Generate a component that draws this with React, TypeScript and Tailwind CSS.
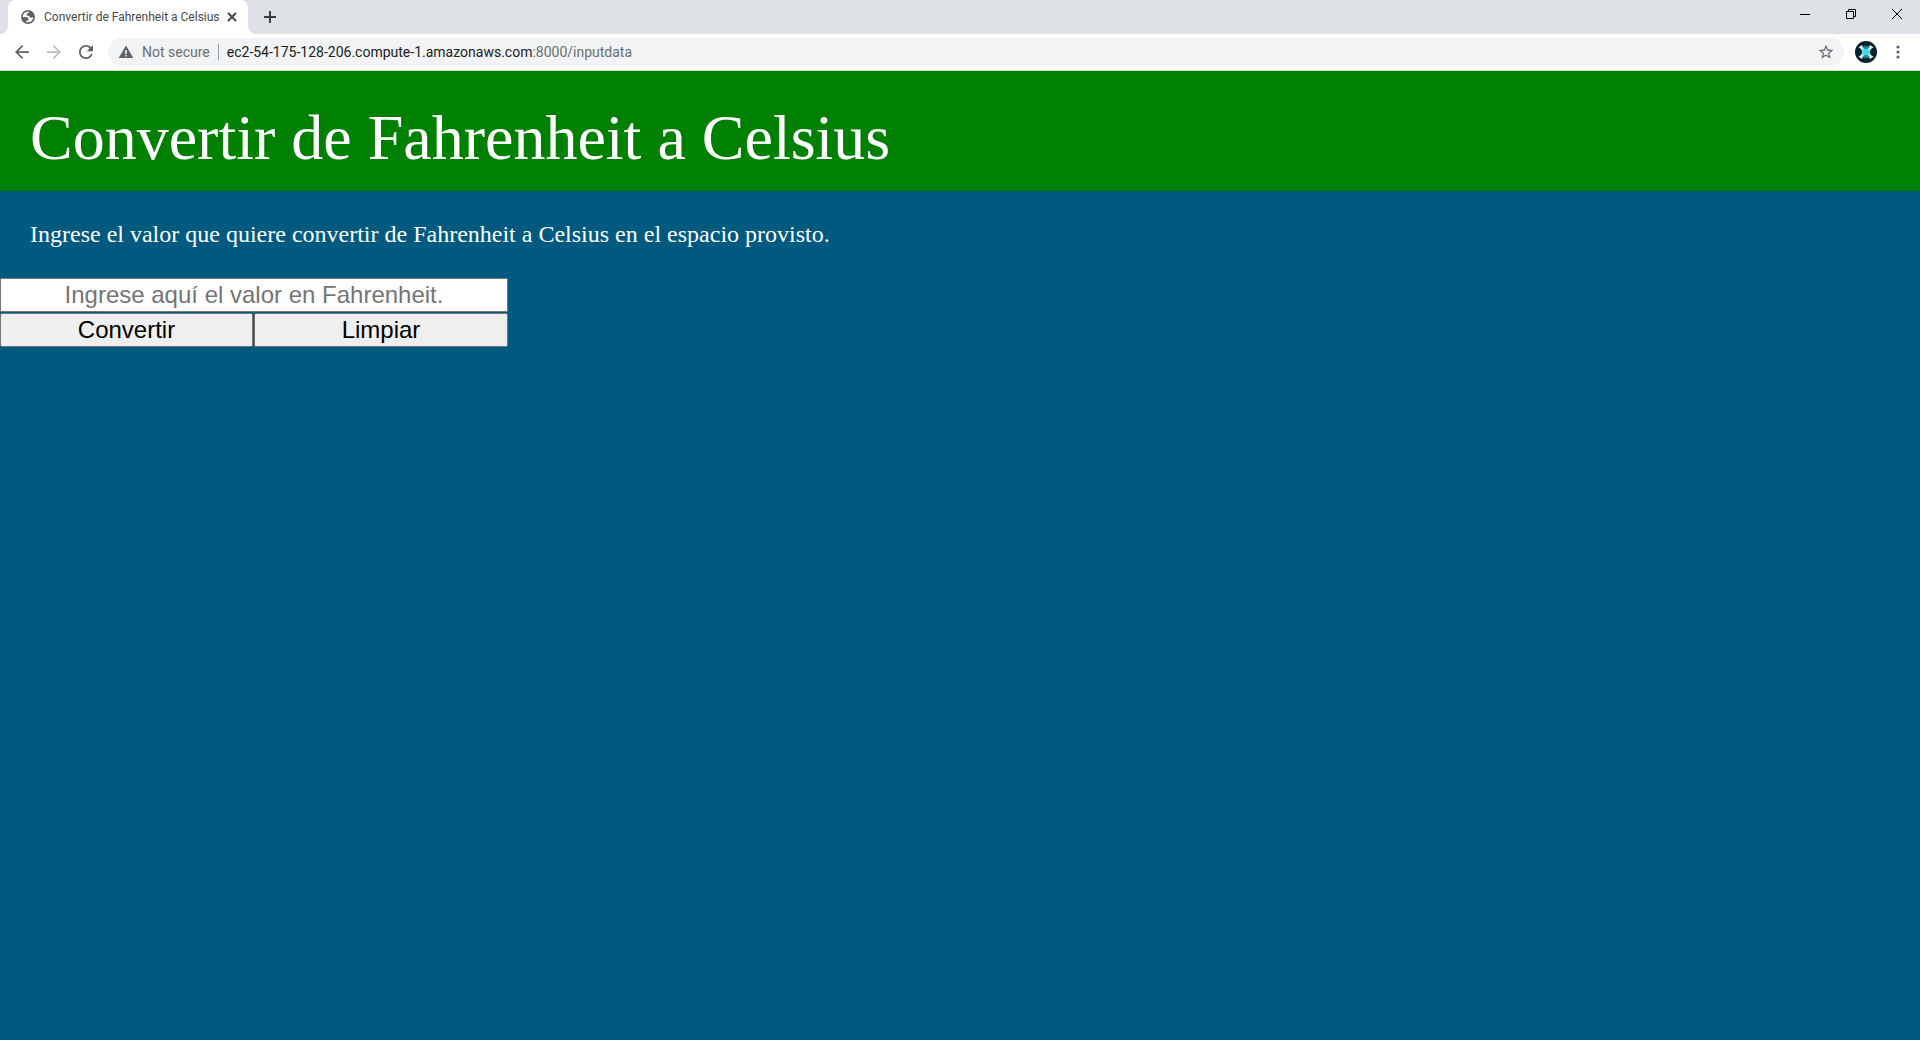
import { useState } from "react";

function TabShoulder({ flip = false }: { flip?: boolean }) {
  return (
    <svg viewBox="0 0 8 8" className={flip ? "size-2 -scale-x-100" : "size-2"} aria-hidden="true">
      <path d="M8 0v8H0a8 8 0 0 0 8-8z" fill="#fff" />
    </svg>
  );
}

function TabStrip() {
  return (
    <div className="flex h-[34px] items-end justify-between bg-[#dee1e6]">
      <div className="flex h-full items-end">
        <TabShoulder />
        <div className="flex h-full w-60 items-center rounded-t-lg bg-white pr-2 pl-3">
          <svg viewBox="0 0 24 24" className="size-4 shrink-0" fill="#5f6368" fillRule="evenodd" aria-hidden="true">
            <path d="M12 1.500a10.500 10.500 0 1 0 0 21a10.500 10.500 0 1 0 0-21zM4 12h4.400c3.407.022 4.922 1.730 4.543 5.127H9.488v2.470a8.004 8.004 0 0 0 10.498-8.080C19.327 12.504 18.332 13 17 13c-2.137 0-3.206-.916-3.206-2.750h-3.748c-.274-2.728.683-4.092 2.870-4.092 0-.975.327-1.597.811-1.970A8.004 8.004 0 0 0 4 12z" />
          </svg>
          <span className="ml-2 flex-1 text-xs whitespace-nowrap text-[#45494d]">
            Convertir de Fahrenheit a Celsius
          </span>
          <button type="button" aria-label="Close tab" className="grid size-4 place-items-center">
            <svg viewBox="0 0 16 16" className="size-4" fill="none" stroke="#3c4043" strokeWidth="1.8">
              <path d="M4 4l8 8M12 4l-8 8" />
            </svg>
          </button>
        </div>
        <TabShoulder flip />
        <button type="button" aria-label="New tab" className="grid h-[34px] w-7 place-items-center">
          <svg viewBox="0 0 12 12" className="size-3" fill="none" stroke="#3c4043" strokeWidth="2">
            <path d="M6 0v12M0 6h12" />
          </svg>
        </button>
      </div>
      <div className="flex h-full items-start">
        <button type="button" aria-label="Minimize" className="grid h-7 w-[46px] place-items-center">
          <svg viewBox="0 0 10 10" className="size-2.5" shapeRendering="crispEdges">
            <path d="M0 5h10v1H0z" fill="#000" />
          </svg>
        </button>
        <button type="button" aria-label="Restore" className="grid h-7 w-[46px] place-items-center">
          <svg viewBox="0 0 10 10" className="size-2.5" fill="none" stroke="#000">
            <path d="M.5 2.5h7v7h-7zM2.5 2.5v-2h7v7h-2" />
          </svg>
        </button>
        <button type="button" aria-label="Close" className="grid h-7 w-[46px] place-items-center">
          <svg viewBox="0 0 10 10" className="size-2.5" fill="none" stroke="#000">
            <path d="M0 0l10 10M10 0L0 10" />
          </svg>
        </button>
      </div>
    </div>
  );
}

function Toolbar() {
  return (
    <div className="flex h-9 items-center bg-white pr-3 pl-1.5">
      <button type="button" aria-label="Back" className="grid h-7 w-8 place-items-center">
        <svg viewBox="4 4 16 16" className="size-3.5" fill="#5f6368">
          <path d="M20 11H7.830l5.590-5.590L12 4l-8 8 8 8 1.410-1.410L7.830 13H20v-2z" />
        </svg>
      </button>
      <button type="button" aria-label="Forward" className="grid h-7 w-8 place-items-center">
        <svg viewBox="4 4 16 16" className="size-3.5 -scale-x-100" fill="#babcbe">
          <path d="M20 11H7.830l5.590-5.590L12 4l-8 8 8 8 1.410-1.410L7.830 13H20v-2z" />
        </svg>
      </button>
      <button type="button" aria-label="Reload" className="grid h-7 w-8 place-items-center">
        <svg viewBox="4 4 16 16" className="size-3.5" fill="#5f6368">
          <path d="M17.650 6.350C16.200 4.900 14.210 4 12 4c-4.420 0-7.990 3.580-7.990 8s3.570 8 7.990 8c3.730 0 6.840-2.550 7.730-6h-2.080c-.82 2.330-3.040 4-5.650 4-3.310 0-6-2.690-6-6s2.690-6 6-6c1.660 0 3.140.690 4.220 1.780L13 11h7V4l-2.350 2.350z" />
        </svg>
      </button>
      <div className="ml-1.5 flex h-7 flex-1 items-center rounded-full bg-[#f1f3f4] pr-2.5 pl-2.5 text-sm">
        <svg viewBox="0 0 16 16" className="size-4" aria-hidden="true">
          <path d="M8 1.5L15.300 14H.7z" fill="#5f6368" />
          <path d="M7.200 6h1.600v4H7.200zM7.200 11h1.600v1.500H7.200z" fill="#f1f3f4" />
        </svg>
        <span className="ml-2 text-[#6b6f73]">Not secure</span>
        <span className="mx-2 h-4 w-px bg-[#9aa0a6]" />
        <a href="#inputdata" className="flex-1 whitespace-nowrap text-[#202124]">
          ec2-54-175-128-206.compute-1.amazonaws.com<span className="text-[#6b6f73]">:8000/inputdata</span>
        </a>
        <button type="button" aria-label="Bookmark this page" className="grid size-4 place-items-center">
          <svg viewBox="1 1 22 22" className="size-4" fill="#5f6368">
            <path d="M22 9.240l-7.190-.620L12 2 9.190 8.630 2 9.240l5.460 4.730L5.820 21 12 17.270 18.180 21l-1.630-7.030L22 9.240zM12 15.400l-3.760 2.270 1-4.280-3.320-2.880 4.380-.380L12 6.100l1.710 4.040 4.380.380-3.320 2.880 1 4.280L12 15.400z" />
          </svg>
        </button>
      </div>
      <button type="button" aria-label="Profile" className="mx-[11px] size-[22px]">
        <svg viewBox="0 0 22 22" className="size-[22px]">
          <defs>
            <radialGradient id="glow" gradientUnits="userSpaceOnUse" cx="11" cy="11" r="9">
              <stop offset="0" stopColor="#35dbe4" />
              <stop offset="0.35" stopColor="#43d9e0" />
              <stop offset="0.6" stopColor="#f2ffff" />
              <stop offset="1" stopColor="#fff" />
            </radialGradient>
          </defs>
          <circle cx="11" cy="11" r="11" fill="#06222a" />
          <path d="M7.500 5h7L13 11l1.500 6h-7L9 11z" fill="#0f8f98" />
          <path
            d="M3.500 6.500L7 4q.5 4 4 4t4-4l3.500 2.500Q15 7.500 15 11t3.500 4.500L15 18q-.5-4-4-4t-4 4l-3.500-2.500Q7 14.500 7 11T3.500 6.500z"
            fill="url(#glow)"
          />
        </svg>
      </button>
      <button type="button" aria-label="Menu" className="grid h-7 w-5 place-items-center">
        <svg viewBox="0 0 4 14" className="h-3.5 w-1" fill="#5f6368">
          <circle cx="2" cy="2" r="1.6" />
          <circle cx="2" cy="7" r="1.6" />
          <circle cx="2" cy="12" r="1.6" />
        </svg>
      </button>
    </div>
  );
}

export default function App() {
  const [value, setValue] = useState("");
  const button =
    "h-[34px] rounded-xs border border-[#767676] bg-[#efefef] font-['Liberation_Sans',Arial,sans-serif] text-2xl leading-8 text-black";
  return (
    <div className="flex min-h-screen flex-col bg-[#005a80]">
      <div className="border-b border-[#d4d6da] font-['Roboto','Open_Sans',sans-serif]">
        <TabStrip />
        <Toolbar />
      </div>
      <header className="bg-[#008000] px-[30px] pt-[30px] pb-4">
        <h1 className="font-['Liberation_Serif','Times_New_Roman',serif] text-[64px] leading-[74px] text-white">
          Convertir de Fahrenheit a Celsius
        </h1>
      </header>
      <main>
        <p className="p-[30px] font-['Liberation_Serif','Times_New_Roman',serif] text-2xl leading-[27px] text-white">
          Ingrese el valor que quiere convertir de Fahrenheit a Celsius en el espacio provisto.
        </p>
        <form className="flex w-[508px] flex-col gap-px" onSubmit={(e) => e.preventDefault()}>
          <input
            type="text"
            aria-label="Valor en Fahrenheit"
            placeholder="Ingrese aquí el valor en Fahrenheit."
            value={value}
            onChange={(e) => setValue(e.target.value)}
            className="h-[34px] w-full border border-[#767676] bg-white text-center font-['Liberation_Sans',Arial,sans-serif] text-2xl text-black placeholder:text-[#757575]"
          />
          <div className="grid grid-cols-[253px_1fr] gap-px">
            <button type="submit" className={button}>Convertir</button>
            <button type="button" className={button} onClick={() => setValue("")}>Limpiar</button>
          </div>
        </form>
      </main>
    </div>
  );
}
